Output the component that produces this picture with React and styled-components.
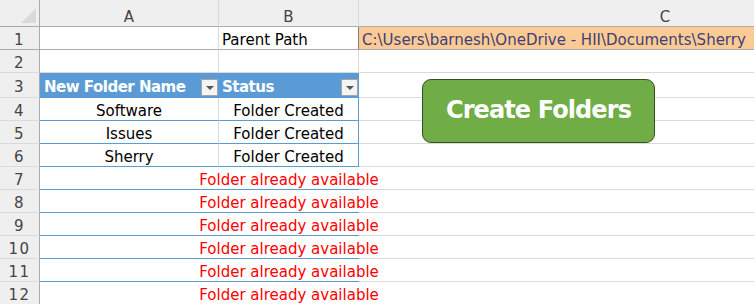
import React from 'react'
import styled, { createGlobalStyle } from 'styled-components'

const GRID = '#DADADA'
const HEADLINE = '#ABABAB'
const BLUE = '#5B9BD5'

const GlobalStyle = createGlobalStyle`
  html, body {
    margin: 0;
    padding: 0;
    background: #ffffff;
  }
  body {
    font-family: "DejaVu Sans", "Liberation Sans", sans-serif;
  }
`

const Sheet = styled.div`
  position: relative;
  width: 754px;
  height: 304px;
  overflow: hidden;
  background: #ffffff;
`

const Row = styled.div`
  display: grid;
  grid-template-columns: 40px 179px 140px 613px;
  height: ${props => props.$h}px;
`

const Cell = styled.div`
  box-sizing: border-box;
  display: flex;
  align-items: flex-end;
  justify-content: ${props => props.$align === 'center' ? 'center' : props.$align === 'between' ? 'space-between' : 'flex-start'};
  padding: ${props => props.$pad || '0 3px'};
  background: ${props => props.$bg || 'transparent'};
  color: ${props => props.$color || '#000000'};
  font-size: 15px;
  line-height: 17px;
  font-weight: ${props => props.$bold ? 700 : 400};
  letter-spacing: ${props => props.$bold ? '-0.5px' : '0'};
  white-space: nowrap;
  overflow: ${props => props.$spill ? 'visible' : 'hidden'};
  position: ${props => props.$spill ? 'relative' : 'static'};
  z-index: ${props => props.$spill ? 1 : 'auto'};
  border-right: ${props => props.$right ? '1px solid ' + props.$right : 'none'};
  border-bottom: ${props => props.$bottom ? '1px solid ' + props.$bottom : 'none'};
`

const HeadCell = styled(Cell)`
  background: #EFEFEF;
  color: #444444;
  justify-content: center;
  letter-spacing: ${props => props.$num ? '1.5px' : '0'};
`

const Corner = styled.div`
  box-sizing: border-box;
  position: relative;
  background: #EFEFEF;
  border-right: 1px solid ${HEADLINE};
  border-bottom: 1px solid ${HEADLINE};
  &::after {
    content: '';
    position: absolute;
    right: 3px;
    bottom: 3px;
    width: 15px;
    height: 15px;
    background: #D9D9D9;
    clip-path: polygon(100% 0, 100% 100%, 0 100%);
  }
`

const FilterButton = styled.span`
  box-sizing: border-box;
  display: flex;
  align-items: center;
  justify-content: center;
  width: 17px;
  height: 17px;
  background: #F4F4F4;
  border: 1px solid #A6A6A6;
  &::after {
    content: '';
    width: 0;
    height: 0;
    border-left: 4px solid transparent;
    border-right: 4px solid transparent;
    border-top: 4px solid #555555;
    margin-top: 1px;
  }
`

const ActionButton = styled.button`
  position: absolute;
  left: 422px;
  top: 79px;
  width: 233px;
  height: 64px;
  box-sizing: border-box;
  background: #70AD47;
  border: 1.5px solid #34521F;
  border-radius: 9px;
  color: #ffffff;
  font-family: "DejaVu Sans", "Liberation Sans", sans-serif;
  font-size: 24px;
  font-weight: 700;
  letter-spacing: -0.9px;
  cursor: pointer;
  padding: 0 0 2px 0;
`

const PATH = 'C:\\Users\\barnesh\\OneDrive - HII\\Documents\\Sherry'

const created = [
  { n: 4, name: 'Software' },
  { n: 5, name: 'Issues' },
  { n: 6, name: 'Sherry' }
]

const leftovers = [7, 8, 9, 10, 11, 12]

const App = () => {
  return (
    <Sheet>
      <GlobalStyle />

      <Row $h={27}>
        <Corner />
        <HeadCell $right={GRID} $bottom={HEADLINE}>A</HeadCell>
        <HeadCell $right={GRID} $bottom={HEADLINE}>B</HeadCell>
        <HeadCell $right={GRID} $bottom={HEADLINE}>C</HeadCell>
      </Row>

      <Row $h={23}>
        <HeadCell $num $right={HEADLINE} $bottom={HEADLINE}>1</HeadCell>
        <Cell $right={GRID} $bottom={HEADLINE} />
        <Cell $right="#7F7F7F" $bottom={HEADLINE}>Parent Path</Cell>
        <Cell $bg="#FCCB95" $color="#3F3F76" $right={GRID} $bottom={HEADLINE}>{PATH}</Cell>
      </Row>

      <Row $h={23}>
        <HeadCell $num $right={HEADLINE} $bottom={GRID}>2</HeadCell>
        <Cell $right={GRID} $bottom={GRID} />
        <Cell $right={GRID} $bottom={GRID} />
        <Cell $right={GRID} $bottom={GRID} />
      </Row>

      <Row $h={25}>
        <HeadCell $num $right={HEADLINE} $bottom={GRID} $pad="0 0 1px 0">3</HeadCell>
        <Cell $align="between" $bg={BLUE} $color="#ffffff" $bold $bottom={BLUE} $pad="0 1px 1px 4px">
          New Folder Name
          <FilterButton />
        </Cell>
        <Cell $align="between" $bg={BLUE} $color="#ffffff" $bold $right={BLUE} $bottom={BLUE} $pad="0 0 1px 3px">
          Status
          <FilterButton />
        </Cell>
        <Cell $right={GRID} $bottom={GRID} />
      </Row>

      {created.map(row => (
        <Row $h={23} key={`created-${row.n}`}>
          <HeadCell $num $right={HEADLINE} $bottom={GRID}>{row.n}</HeadCell>
          <Cell $align="center" $right={GRID} $bottom={BLUE}>{row.name}</Cell>
          <Cell $align="center" $right={BLUE} $bottom={BLUE}>Folder Created</Cell>
          <Cell $right={GRID} $bottom={GRID} />
        </Row>
      ))}

      {leftovers.map(n => (
        <Row $h={23} key={`left-${n}`}>
          <HeadCell $num $right={HEADLINE} $bottom={GRID}>{n}</HeadCell>
          <Cell $bottom={BLUE} />
          <Cell $align="center" $color="#FF0000" $spill $bottom={BLUE}>Folder already available</Cell>
          <Cell $right={GRID} $bottom={GRID} />
        </Row>
      ))}

      <ActionButton>Create Folders</ActionButton>
    </Sheet>
  )
}

export default App
